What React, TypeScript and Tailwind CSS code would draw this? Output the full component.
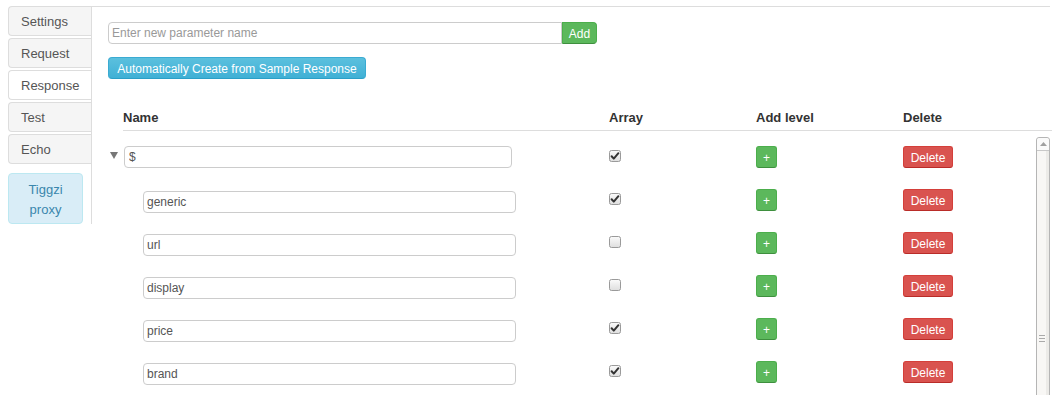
import React from "react";

const rows = [
  { name: "generic", checked: true },
  { name: "url", checked: false },
  { name: "display", checked: false },
  { name: "price", checked: true },
  { name: "brand", checked: true },
];

function Check({ checked }: { checked: boolean }) {
  return (
    <svg width="12" height="12" viewBox="0 0 12 12" className="block">
      <defs>
        <linearGradient id="cbg" x1="0" y1="0" x2="0" y2="1">
          <stop offset="0" stopColor="#fbfbfb" />
          <stop offset="1" stopColor="#dedede" />
        </linearGradient>
      </defs>
      <rect x="0.5" y="0.5" width="11" height="11" rx="2" fill="url(#cbg)" stroke="#9a9a9a" />
      {checked && (
        <path d="M2.6 6.2 L4.8 8.6 L9.4 3.2" fill="none" stroke="#333" strokeWidth="2" strokeLinecap="round" strokeLinejoin="round" />
      )}
    </svg>
  );
}

function Tab({ label, active }: { label: string; active?: boolean }) {
  return (
    <div
      className={
        "h-[30px] mb-[2px] border border-r-0 border-[#ddd] rounded-l-[4px] flex items-center pl-[12px] pt-[1px] text-[13px] text-[#555] " +
        (active ? "bg-white" : "bg-[#f5f5f5]")
      }
    >
      {label}
    </div>
  );
}

function Actions({ checked }: { checked: boolean }) {
  return (
    <>
      <div className="w-[147px] pt-[4px]">
        <Check checked={checked} />
      </div>
      <div className="w-[147px]">
        <button className="w-[21px] h-[22px] pt-[1px] rounded-[3px] bg-[#5cb85c] border border-[#4cae4c] border-b-[#3e8f3e] text-white text-[12px] leading-none flex items-center justify-center">
          +
        </button>
      </div>
      <div>
        <button className="w-[50px] h-[22px] pt-[1px] rounded-[3px] bg-[#d9534f] border border-[#d43f3a] border-b-[#b92c28] text-white text-[12px] leading-none flex items-center justify-center">
          Delete
        </button>
      </div>
    </>
  );
}

export default function App() {
  return (
    <div className="w-[1056px] h-[395px] overflow-hidden bg-white flex font-['Liberation_Sans',Arial,sans-serif]">
      {/* left nav */}
      <div className="pl-[8px] pt-[6px] shrink-0">
        <div className="w-[84px] border-r border-[#ddd]">
          <Tab label="Settings" />
          <Tab label="Request" />
          <Tab label="Response" active />
          <Tab label="Test" />
          <Tab label="Echo" />
          <div className="mt-[9px] w-[75px] h-[51px] rounded-[4px] bg-[#d9edf7] border border-[#bce8f1] text-[#3a87ad] text-[13px] leading-[20px] text-center pt-[6px]">
            Tiggzi
            <br />
            proxy
          </div>
        </div>
      </div>

      {/* content */}
      <div className="pt-[6px] shrink-0">
        <div className="w-[958px] border-t border-[#ddd] pl-[16px] pt-[15px]">
          <div className="flex">
            <input
              className="w-[454px] h-[22px] border border-[#ccc] rounded-l-[4px] px-[3px] text-[12px] text-[#555] placeholder:text-[#999] outline-none"
              placeholder="Enter new parameter name"
            />
            <button className="w-[35px] h-[22px] pt-[1px] rounded-r-[4px] bg-[#5cb85c] border border-[#4cae4c] border-b-[#3e8f3e] text-white text-[12px] leading-none">
              Add
            </button>
          </div>
          <button className="block mt-[13px] h-[22px] w-[258px] pt-[1px] rounded-[4px] bg-gradient-to-b from-[#5bc0de] to-[#3fb0d5] border border-[#3aabd2] border-b-[#2a9fc7] text-white text-[12px] leading-none">
            Automatically Create from Sample Response
          </button>

          {/* table */}
          <div className="mt-[25px] ml-[15px] w-[929px]">
            <div className="h-[27px] pt-[2px] border-b border-[#ddd] flex items-center text-[13px] font-bold text-[#333]">
              <div className="w-[486px]">Name</div>
              <div className="w-[147px]">Array</div>
              <div className="w-[147px]">Add level</div>
              <div>Delete</div>
            </div>
            <div className="flex">
              <div className="w-[913px] pt-[15px]">
                {/* root row */}
                <div className="h-[43px] flex items-start">
                  <div className="w-[499px] shrink-0 flex items-start ml-[-13px]">
                    <svg width="8" height="7" viewBox="0 0 8 7" className="mt-[6px] block">
                      <polygon points="0,0 8,0 4,7" fill="#777" />
                    </svg>
                    <input
                      readOnly
                      value="$"
                      className="ml-[6px] w-[388px] h-[22px] border border-[#ccc] rounded-[4px] px-[4px] text-[12px] text-[#555] outline-none"
                    />
                  </div>
                  <Actions checked={true} />
                </div>
                {rows.map((r) => (
                  <div key={r.name} className="h-[43px] flex items-start">
                    <div className="w-[486px] shrink-0 pl-[20px]">
                      <input
                        readOnly
                        value={r.name}
                        className="w-[373px] h-[22px] border border-[#ccc] rounded-[4px] px-[3px] text-[12px] text-[#555] outline-none"
                      />
                    </div>
                    <Actions checked={r.checked} />
                  </div>
                ))}
              </div>
              {/* scrollbar */}
              <div className="mt-[6px] w-[14px] h-[300px] border border-[#b5b5b5] rounded-t-[3px] bg-[#f8f7f5] flex flex-col">
                <div className="h-[13px] border-b border-[#c8c8c8] bg-[#fafafa] rounded-t-[3px] flex items-center justify-center">
                  <svg width="7" height="4" viewBox="0 0 7 4" className="block">
                    <polygon points="0,4 7,4 3.5,0" fill="#a0a0a0" />
                  </svg>
                </div>
                <div className="flex-1 flex">
                  <div className="flex-1 flex flex-col items-center">
                    <div className="mt-[184px] flex flex-col gap-[2px]">
                      <div className="w-[6px] h-px bg-[#aaa]" />
                      <div className="w-[6px] h-px bg-[#aaa]" />
                      <div className="w-[6px] h-px bg-[#aaa]" />
                    </div>
                  </div>
                  <div className="w-[3px] bg-[#ecebe8]" />
                </div>
              </div>
            </div>
          </div>
        </div>
      </div>
    </div>
  );
}
